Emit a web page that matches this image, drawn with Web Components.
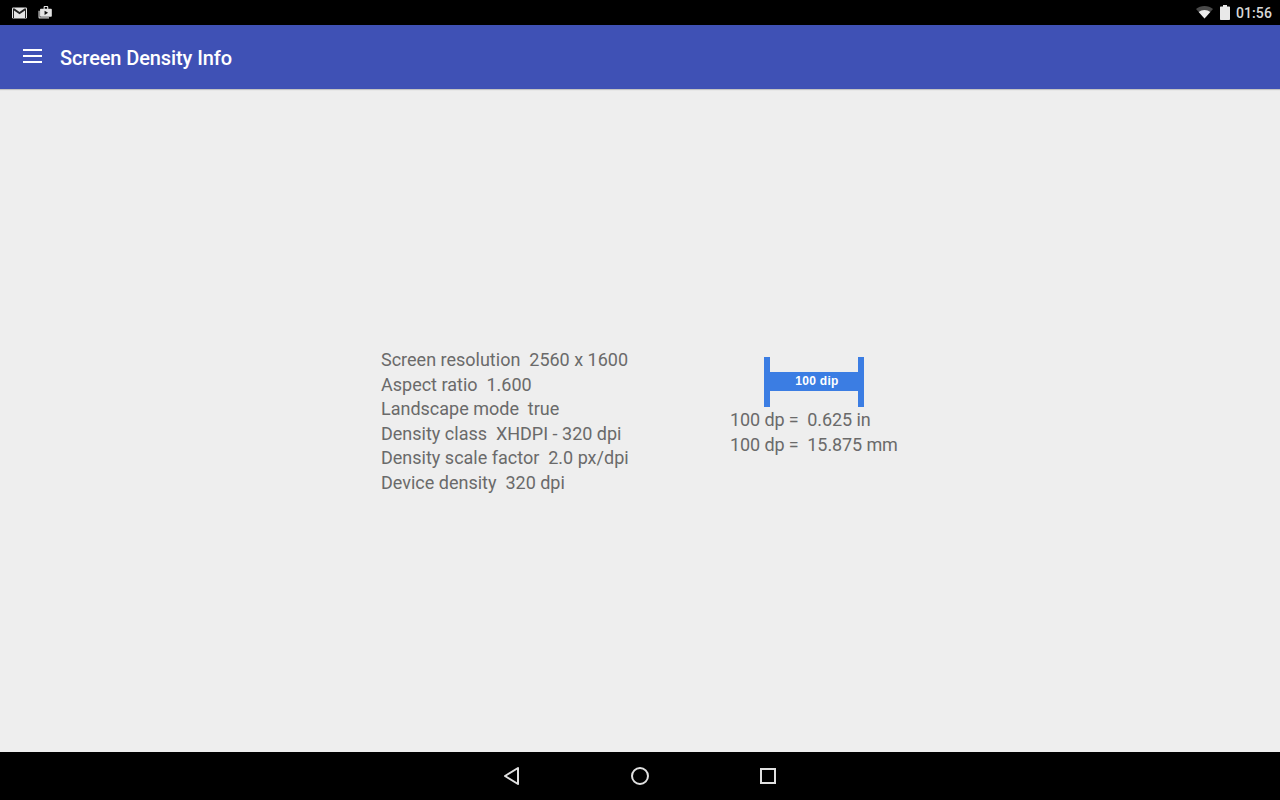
<!DOCTYPE html>
<html>
<head>
<meta charset="utf-8">
<title>Screen Density Info</title>
<style>
html, body { margin: 0; height: 100%; }
body { width: 1280px; height: 800px; overflow: hidden; font-family: Roboto, "Liberation Sans", sans-serif; }
</style>
</head>
<body>
<density-app></density-app>

<script>
class StatusBar extends HTMLElement {
	constructor() {
		super();
		this.attachShadow({ mode: "open" });
		this.shadowRoot.innerHTML = `
			<style>
				:host { display:flex; align-items:center; height:25px; background:#000; color:#d8d8d8; padding:0 8px 0 12px; box-sizing:border-box; }
				.left { display:flex; gap:11px; align-items:center; }
				.right { margin-left:auto; display:flex; align-items:center; }
				svg { display:block; }
				.time { font-size:14px; font-weight:500; margin:2px 0 0 6px; line-height:25px; letter-spacing:.1px; }
			</style>
			<div class="left">
				<svg width="15" height="12" viewBox="0 0 15 12">
					<rect x="0" y="0.5" width="15" height="11" rx="1.2" fill="#e4e4e4"/>
					<path d="M2 11V3.500l5.500 3.700L13 3.500V11h1V1.500h-1.500L7.500 5 2.500 1.500H1V11z" fill="#222"/>
				</svg>
				<svg width="14" height="15" viewBox="0 0 15 15">
					<path d="M0.500 5.500v7.200c0 .8.600 1.300 1.300 1.300h10v-1.300H1.800V5.500z" fill="#d0d0d0"/>
					<path d="M3 3.500h3V1.700C6 1 6.500.500 7.200.500h2.600c.7 0 1.200.5 1.200 1.200v1.800h3c.4 0 .8.400.8.800v7c0 .4-.4.700-.8.700H3c-.4 0-.8-.3-.8-.7v-7c0-.4.400-.800.800-.800zM7.200 3.500h2.600V1.700H7.200z" fill="#e4e4e4" fill-rule="evenodd"/>
					<path d="M7 5.500v4.600l3.800-2.300z" fill="#111"/>
				</svg>
			</div>
			<div class="right">
				<svg width="17" height="13" viewBox="0 0 17 13">
					<path d="M8.500 12.500L0 3C2.300 1.100 5.200 0 8.500 0S14.700 1.100 17 3z" fill="#4a4a4a"/>
					<path d="M8.500 12.500L2.700 6C4.300 4.700 6.300 4 8.500 4s4.200.7 5.800 2z" fill="#ececec"/>
				</svg>
				<svg style="margin-left:7px" width="10" height="15" viewBox="0 0 10 15">
					<path d="M3 0h4v1.500h2c.6 0 1 .4 1 1V14c0 .6-.4 1-1 1H1c-.6 0-1-.4-1-1V2.500c0-.6.4-1 1-1h2z" fill="#e8e8e8"/>
				</svg>
				<span class="time">01:56</span>
			</div>
		`;
	}
}

class AppBar extends HTMLElement {
	constructor() {
		super();
		this.attachShadow({ mode: "open" });
		this.shadowRoot.innerHTML = `
			<style>
				:host { display:flex; align-items:center; height:64px; background:#3f51b5; color:#fff; padding-left:23px; box-shadow:0 1px 1px rgba(0,0,0,.18); position:relative; box-sizing:border-box; }
				svg { display:block; margin-top:-2px; }
				.title { margin:2px 0 0 18px; font-size:20px; font-weight:500; line-height:28px; letter-spacing:-.1px; }
			</style>
			<svg width="19" height="14" viewBox="0 0 19 14" fill="#fff">
				<rect y="0" width="19" height="2"/>
				<rect y="6" width="19" height="2"/>
				<rect y="12" width="19" height="2"/>
			</svg>
			<span class="title"><slot></slot></span>
		`;
	}
}

class InfoList extends HTMLElement {
	constructor() {
		super();
		this.attachShadow({ mode: "open" });
		this.shadowRoot.innerHTML = `
			<style>
				:host { display:block; color:#6a6a6a; font-size:18px; line-height:24.500px; }
			</style>
			<slot></slot>
		`;
	}
}

class DipRuler extends HTMLElement {
	constructor() {
		super();
		this.attachShadow({ mode: "open" });
		this.shadowRoot.innerHTML = `
			<style>
				:host { display:flex; align-items:flex-start; width:100px; height:50px; box-sizing:border-box; border-left:6px solid #3b7de3; border-right:6px solid #3b7de3; }
				.bar { flex:1; height:19px; margin-top:15px; background:#3b7de3; color:#fff; font:bold 12px/19px "Liberation Sans", Arial, sans-serif; letter-spacing:.3px; text-align:center; padding-left:6px; box-sizing:border-box; }
			</style>
			<div class="bar"><slot></slot></div>
		`;
	}
}

class NavBar extends HTMLElement {
	constructor() {
		super();
		this.attachShadow({ mode: "open" });
		this.shadowRoot.innerHTML = `
			<style>
				:host { display:flex; justify-content:center; align-items:center; gap:96px; height:48px; background:#000; }
				svg { display:block; width:32px; height:32px; fill:none; stroke:#e0e0e0; stroke-width:2; }
			</style>
			<svg viewBox="0 0 32 32"><path d="M22 8L9 16l13 8z" stroke-linejoin="round"/></svg>
			<svg viewBox="0 0 32 32"><circle cx="16" cy="16" r="8"/></svg>
			<svg viewBox="0 0 32 32"><rect x="9" y="9" width="14" height="14"/></svg>
		`;
	}
}

class DensityApp extends HTMLElement {
	constructor() {
		super();
		this.attachShadow({ mode: "open" });
		this.shadowRoot.innerHTML = `
			<style>
				:host { display:flex; flex-direction:column; height:800px; background:#eee; }
				main { flex:1; display:flex; justify-content:center; min-height:0; }
				.wrap { display:flex; align-items:flex-start; margin:259px 0 0 2px; }
				.info { width:349px; }
				.right { display:flex; flex-direction:column; width:171px; padding-top:9px; letter-spacing:-.1px; }
				dip-ruler { margin:0 0 1px 34px; }
				.line { display:block; height:24.500px; white-space:pre; }
			</style>
			<status-bar></status-bar>
			<app-bar>Screen Density Info</app-bar>
			<main>
				<div class="wrap">
					<info-list class="info">
						<span class="line">Screen resolution  2560 x 1600</span>
						<span class="line">Aspect ratio  1.600</span>
						<span class="line">Landscape mode  true</span>
						<span class="line">Density class  XHDPI - 320 dpi</span>
						<span class="line">Density scale factor  2.0 px/dpi</span>
						<span class="line">Device density  320 dpi</span>
					</info-list>
					<div class="right">
						<dip-ruler>100 dip</dip-ruler>
						<info-list>
							<span class="line">100 dp =  0.625 in</span>
							<span class="line">100 dp =  15.875 mm</span>
						</info-list>
					</div>
				</div>
			</main>
			<nav-bar></nav-bar>
		`;
	}
}

customElements.define("status-bar", StatusBar);
customElements.define("app-bar", AppBar);
customElements.define("info-list", InfoList);
customElements.define("dip-ruler", DipRuler);
customElements.define("nav-bar", NavBar);
customElements.define("density-app", DensityApp);
</script>
</body>
</html>
